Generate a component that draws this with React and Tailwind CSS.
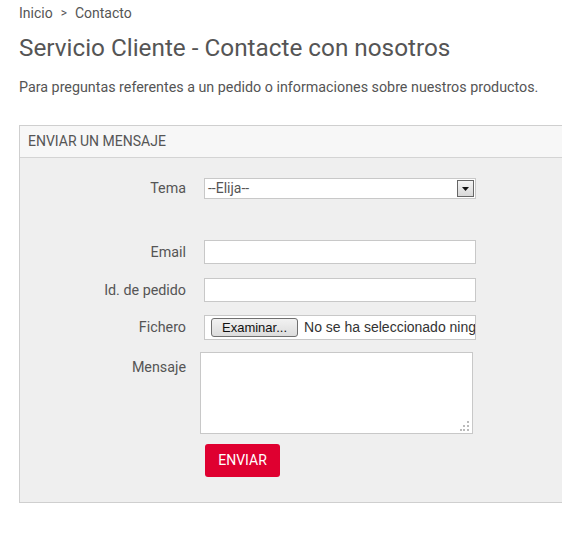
import { useState } from "react";

function FormRow({ label, children, className = "" }) {
  return (
    <div className={`flex items-center ${className}`}>
      <label className="w-[166px] shrink-0 text-right text-[14.3px] text-[#555]">
        {label}
      </label>
      {children}
    </div>
  );
}

export default function App() {
  const [email, setEmail] = useState("");
  const [orderId, setOrderId] = useState("");
  const [message, setMessage] = useState("");

  return (
    <div className="w-[562px] h-[538px] overflow-hidden bg-white font-['Roboto',sans-serif] text-[#555]">
      <div className="pl-[19px] pt-[4px]">
        {/* Breadcrumb */}
        <div className="text-[14px] leading-[18px] flex items-center">
          <span>Inicio</span>
          <span className="mx-[8px] text-[12px]">&gt;</span>
          <span>Contacto</span>
        </div>

        {/* Title */}
        <h1 className="mt-[11px] text-[24.3px] leading-[30px] text-[#555]">
          Servicio Cliente - Contacte con nosotros
        </h1>

        <p className="mt-[15px] text-[14.3px] leading-[18px]">
          Para preguntas referentes a un pedido o informaciones sobre nuestros productos.
        </p>

        {/* Panel */}
        <div className="mt-[29px] w-[600px] border border-[#cfcfcf] bg-[#efefef]">
          <div className="h-[32px] flex items-center pl-[8px] bg-[#f7f7f7] border-b border-[#d4d4d4] text-[14px] uppercase text-[#555]">
            Enviar un mensaje
          </div>

          <div className="pt-[20px] pb-[25px]">
            {/* Tema */}
            <FormRow label="Tema">
              <div className="ml-[18px] w-[272px] h-[21px] bg-white border border-[#c8c8c8] flex items-center justify-between pl-[3px] pr-[1px]">
                <span className="text-[14px] text-[#555]">--Elija--</span>
                <div className="w-[17px] h-[17px] border border-[#666] bg-gradient-to-b from-[#f4f4f4] to-[#d8d8d8] flex items-center justify-center">
                  <svg width="7" height="4" viewBox="0 0 7 4">
                    <path d="M0 0h7L3.5 4z" fill="#111" />
                  </svg>
                </div>
              </div>
            </FormRow>

            {/* Email */}
            <FormRow label="Email" className="mt-[41px]">
              <input
                value={email}
                onChange={(e) => setEmail(e.target.value)}
                className="ml-[18px] w-[272px] h-[24px] bg-white border border-[#c8c8c8] outline-none"
              />
            </FormRow>

            {/* Id pedido */}
            <FormRow label="Id. de pedido" className="mt-[14px]">
              <input
                value={orderId}
                onChange={(e) => setOrderId(e.target.value)}
                className="ml-[18px] w-[272px] h-[24px] bg-white border border-[#c8c8c8] outline-none"
              />
            </FormRow>

            {/* Fichero */}
            <FormRow label="Fichero" className="mt-[13px]">
              <div className="ml-[18px] w-[272px] h-[25px] bg-white border border-[#c8c8c8] flex items-center pl-[6px] overflow-hidden whitespace-nowrap font-['Liberation_Sans',Arial,sans-serif] text-[14px]">
                <div className="h-[19px] px-[10px] flex items-center border border-[#707070] rounded-[3px] bg-gradient-to-b from-[#f2f2f2] to-[#dcdcdc] text-[#111] text-[13px] shrink-0">
                  Examinar...
                </div>
                <span className="ml-[6px] text-[#333]">No se ha seleccionado ningún archivo</span>
              </div>
            </FormRow>

            {/* Mensaje */}
            <div className="flex items-start mt-[12px]">
              <label className="w-[166px] shrink-0 text-right text-[14.3px] text-[#555] pt-[5px]">
                Mensaje
              </label>
              <div className="relative ml-[14px]">
                <textarea
                  value={message}
                  onChange={(e) => setMessage(e.target.value)}
                  className="block w-[273px] h-[82px] bg-white border border-[#c8c8c8] outline-none resize-none"
                />
                <svg className="absolute right-[3px] bottom-[3px]" width="10" height="10" viewBox="0 0 10 10">
                  <rect x="7" y="0" width="2" height="2" fill="#bbb" />
                  <rect x="3" y="4" width="2" height="2" fill="#bbb" />
                  <rect x="7" y="4" width="2" height="2" fill="#bbb" />
                  <rect x="0" y="8" width="2" height="2" fill="#bbb" />
                  <rect x="3" y="8" width="2" height="2" fill="#bbb" />
                  <rect x="7" y="8" width="2" height="2" fill="#bbb" />
                </svg>
              </div>
            </div>

            {/* Submit */}
            <div className="mt-[10px] pl-[185px]">
              <button className="w-[75px] h-[33px] rounded-[3px] bg-[#df0030] text-white text-[14px] uppercase">
                Enviar
              </button>
            </div>
          </div>
        </div>
      </div>
    </div>
  );
}
